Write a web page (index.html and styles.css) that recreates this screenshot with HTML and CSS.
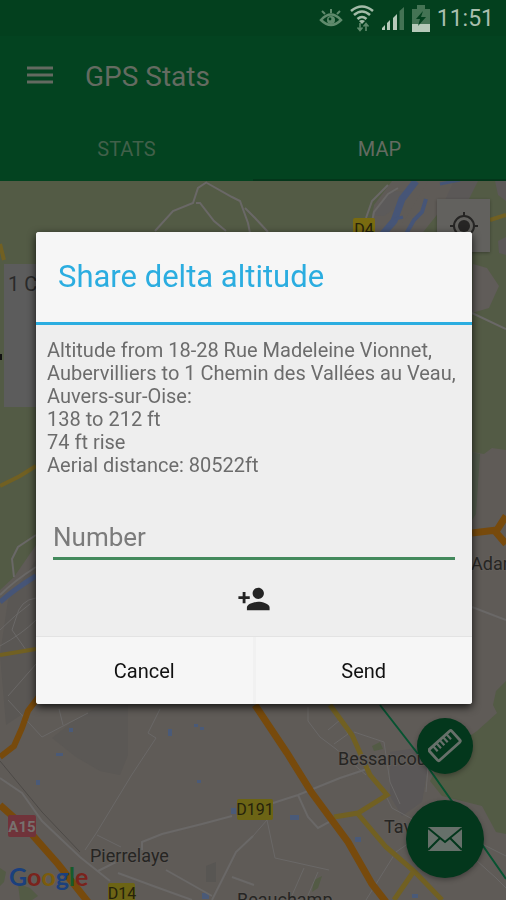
FILE: index.html
```html
<!DOCTYPE html>
<html lang="en">
<head>
  <meta charset="UTF-8">
  <meta name="viewport" content="width=device-width, initial-scale=1">
  <title>GPS Stats</title>
  <link rel="stylesheet" href="styles.css">
</head>
<body>
  <header class="app-header">
    <div class="status-bar">
      <svg viewBox="0 0 24 20" width="24" height="20">
        <path d="M2 12q10-11 20 0q-10 10-20 0z" fill="none" stroke="#5f8a6c" stroke-width="2.500"/>
        <circle cx="12" cy="12" r="4" fill="#5f8a6c"/>
        <circle cx="11" cy="11" r="1.4" fill="#03401e"/>
        <path d="M12 5V1M6 6L3 3M18 6l3-3" stroke="#5f8a6c" stroke-width="2"/>
      </svg>
      <svg viewBox="0 0 24 28" width="24" height="28">
        <g fill="none" stroke="#a3bba8" stroke-width="2.600">
          <path d="M1 7q11-9 22 0"/>
          <path d="M4 11q8-7 16 0"/>
          <path d="M7.500 15q4.500-4 9 0"/>
        </g>
        <path d="M9 17q3-2 6 0l-3 3z" fill="#a3bba8"/>
        <path d="M10 19v7M7.500 23.500L10 26.500l2.500-3M16 27v-7M13.500 22.500L16 19.500l2.500 3" fill="none" stroke="#5f8a6c" stroke-width="1.600"/>
      </svg>
      <svg viewBox="0 0 24 24" width="24" height="24">
        <path d="M1 24v-2l3-3v5zM6 24v-7l3-3v10zM12 24V12l4-4v16z" fill="#b6c9b9"/>
        <path d="M18.500 24V5L23 1v23z" fill="#447354"/>
      </svg>
      <svg viewBox="0 0 18 27" width="18" height="27">
        <path d="M0 4h5V0h8v4h5v23H0z" fill="#447354"/>
        <path d="M0 19h18v8H0z" fill="#b6c9b9"/>
        <path d="M11 6L4 14h4l-2 7 8-9H9z" fill="#03401e"/>
      </svg>
      <span class="clock">11:51</span>
    </div>
    <div class="toolbar">
      <button class="menu-btn" aria-label="Menu">
        <svg viewBox="0 0 26 20" width="26" height="20"><path d="M0 2h26M0 9h26M0 16h26" stroke="#636a60" stroke-width="3"/></svg>
      </button>
      <h1>GPS Stats</h1>
    </div>
    <nav class="tabs">
      <a class="tab" href="#stats">STATS</a>
      <a class="tab active" href="#map">MAP</a>
    </nav>
  </header>

  <main class="map" id="map">
    <svg class="map-canvas" viewBox="0 181 506 719" preserveAspectRatio="xMidYMid slice">
      <rect y="181" width="506" height="719" fill="#5f5b57"/>

      <!-- forests and fields -->
      <g fill="#535b45">
        <path d="M0 181H392L374 205 368 240H36V545L14 577 0 590z"/>
        <path d="M440 181h66v269l-14-2-8 6-12-2V255l-60-20z"/>
        <path d="M472 452l8 2-4 60-4 6z" fill="#515a4b"/>
        <path d="M506 681l-10 10-3 14 4 8-20 18-28 20-15 22-4 8 12 15 40 10 14 26 20 4z"/>
        <path d="M0 868l6 4-2 10-4 4zM18 884l12 4 8 8-6 4H20zM372 746l8-4 3 7-9 2zM314 880l8-4-4 12-6 4z"/>
      </g>

      <!-- built-up areas -->
      <g fill="#5b5857">
        <path d="M473 264l14 4 12 18-10 22-17 5z" fill="#605c59"/>
        <path d="M454 181l-10 15 6 13 18-8 10-20zM495 181h11v20l-8-6zM498 241l8-4v18l-7-2z"/>
        <path d="M52 738l20-16 20-12 36-5v50l-8 20-20-4-24-14z" fill="#5b5855"/>
        <path d="M8 600l28-40v145l-30 20-6-70z" fill="#5a5754"/>
        <path d="M390 752l26-4 12 18-6 36-20 14-12-20z" fill="#5a5757"/>
        <path d="M206 866l10-4v20h-10z" fill="#585653"/>
      </g>
      <path d="M372 215l18-24 18 1-10 14-14 10z" fill="#5c5a5a"/>
      <path d="M428 181h26l-14 30-20 25h-28l14-18z" fill="#5f5b57"/>

      <!-- water -->
      <g fill="none" stroke="#465577">
        <path d="M416 181l-14 18-8 22-12 14" stroke-width="7"/>
        <path d="M426 199l-4 13-8 8-8 14" stroke-width="4"/>
        <path d="M395 219l8-2M440 184l20-4" stroke-width="3"/>
        <path d="M0 602q16-14 36-26" stroke-width="5"/>
      </g>
      <g fill="#4a5a78">
        <path d="M168 729h4v7h-4zM56 753h7v3h-7zM36 780h4v5h-4zM194 724h4v3h-4zM200 727h4v3h-4zM69 728h4v4h-4zM197 780h4v3h-4zM231 808h5v6h-5zM290 815h9v5h-9zM202 893h7v6h-7zM355 837h6v5h-6zM412 894h6v4h-6z"/>
      </g>

      <!-- small roads -->
      <g fill="none" stroke="#6a6867" stroke-width="1">
        <path d="M155 231l18-20 20-8 5-15 9-6M207 183l25 14 8 4 8 22 2 10M196 203l4 0 14 18 12 10M245 208l10 10 13 14" stroke-width="2"/>
        <path d="M370 232l4-20 14-18 10-6M366 218l6-17 16-16" stroke-width="2"/>
        <path d="M472 313l34 16M472 607l34 13" stroke-width="2"/>
        <path d="M0 595q14-14 36-28M14 577l-2-18 6-12 18-12" stroke-width="2"/>
        <path d="M0 646q22-12 36-26M36 598q-16 2-20 20l-4 12 14 20M8 696l14-16 14-16M0 630q16-16 30-26"/>
        <path d="M8 700l34 37 46-24M59 709l4 16M160 709l-12 24 8 5-25 38-34 56-12 18M97 835l24 12"/>
        <path d="M0 778l22 15 20 28 38 36 30 24M118 873l38 14 36 13M98 871l20-10M166 870l46 26" stroke-width="2"/>
        <path d="M142 850v-8l20-8 40-10 30-8M212 900l24-48 17-16M232 877l22 8M270 804l28-9 42-17 30-10M298 795l10 22 10 11 22-12" stroke-width="2"/>
        <path d="M308 707v14l12 16 16 12 30 26M328 730l12-10 8 14-14 10M354 732l30 10 6 40 10 22M384 792l8 16 22 12M253 836l14-16 8 38 54 12M304 868l-14 32M366 900l30-48 20-14M476 860l20 18 10 10M478 842l28 14M318 872l-12 28M430 742l-4 50"/>
      </g>
      <path d="M0 761l42 51 38 40" fill="none" stroke="#4d4a47" stroke-width="1"/>

      <!-- yellow roads -->
      <g fill="none" stroke="#716022" stroke-width="5">
        <path d="M330 705l22 30 18 40 17 20-29 18-24 4M358 814l28 33 28 24 28 29M414 871l-20 29"/>
        <path d="M0 244l4 16M0 486l20-10 16-10M0 655l36-6M490 220l16-5" stroke-width="4"/>
      </g>

      <!-- main roads -->
      <g fill="none" stroke="#774a0c" stroke-width="7">
        <path d="M255 705l32 48 25 40 36 49 24 42 14 18"/>
        <path d="M0 757l14-11 8-18 6-17 12-16" stroke-width="6"/>
        <path d="M0 805l28 25 30 34 30 38"/>
        <path d="M472 533l25-3 9-14M494 530l12 14"/>
      </g>
      <path d="M380 705l45 58 31 44 50 72" fill="none" stroke="#075331" stroke-width="2"/>

      <!-- road shields -->
      <rect x="353" y="218" width="22" height="22" rx="2" fill="#796b10"/>
      <rect x="237" y="799" width="36" height="21" rx="2" fill="#6c6415"/>
      <rect x="108" y="883" width="27" height="22" rx="2" fill="#6c6415"/>
      <rect x="8" y="815" width="28" height="22" rx="2" fill="#70333a"/>
      <g class="shield">
        <text x="364" y="235">D4</text>
        <text x="255" y="815">D191</text>
        <text x="122" y="899">D14</text>
        <text x="22" y="832" class="shield-light">A15</text>
      </g>

      <g class="place">
        <text x="90" y="862">Pierrelaye</text>
        <text x="338" y="765">Bessancourt</text>
        <text x="384" y="833">Taverny</text>
        <text x="237" y="906">Beauchamp</text>
        <text x="471" y="570">Adam</text>
      </g>
      <path d="M0 354h2v6H0z" fill="#111"/>
    </svg>

    <div class="place-card">1 C</div>

    <button class="locate-btn" aria-label="My location">
      <svg viewBox="0 0 28 28" width="28" height="28">
        <circle cx="14" cy="14" r="10" fill="none" stroke="#262524" stroke-width="2"/>
        <circle cx="14" cy="14" r="6" fill="#262524"/>
        <path d="M14 0v5M14 23v5M0 14h5M23 14h5" stroke="#262524" stroke-width="2"/>
      </svg>
    </button>

    <a class="google" href="#google"><span class="g-blue">G</span><span class="g-red">o</span><span class="g-yellow">o</span><span class="g-blue">g</span><span class="g-green">l</span><span class="g-red">e</span></a>

    <div class="fabs">
      <button class="fab" aria-label="Measure">
        <svg viewBox="0 0 34 34" width="34" height="34">
          <g transform="rotate(-42 17 17)" fill="none" stroke="#67706a" stroke-width="2.800">
            <rect x="2" y="9" width="30" height="15" rx="1.500"/>
            <path d="M8 9v7M12.500 9v7M17 9v7M21.500 9v7M26 9v7" stroke-width="2.200"/>
          </g>
        </svg>
      </button>
      <button class="fab fab-large" aria-label="Send message">
        <svg viewBox="0 0 34 24" width="34" height="24">
          <path d="M0 0h34v24H0z" fill="#66706a"/>
          <path d="M0 1l17 14L34 1M0 23l12-12M34 23L22 11" fill="none" stroke="#03371c" stroke-width="2"/>
        </svg>
      </button>
    </div>
  </main>

  <div class="overlay">
    <form class="dialog" role="dialog" aria-labelledby="dialog-title">
      <h2 id="dialog-title">Share delta altitude</h2>
      <div class="dialog-body">
        <p>Altitude from 18-28 Rue Madeleine Vionnet, Aubervilliers to 1 Chemin des Vallées au Veau, Auvers-sur-Oise:<br>
          138 to 212 ft<br>
          74 ft rise<br>
          Aerial distance: 80522ft</p>
        <input class="number" type="tel" placeholder="Number" aria-label="Number">
        <button class="contact-btn" type="button" aria-label="Add contact">
          <svg viewBox="0 0 24 24" width="34" height="34">
            <path fill="#242424" d="M15 12c2.210 0 4-1.790 4-4s-1.790-4-4-4-4 1.790-4 4 1.790 4 4 4zm-9-2V7H4v3H1v2h3v3h2v-3h3v-2H6zm9 4c-2.670 0-8 1.340-8 4v2h16v-2c0-2.660-5.330-4-8-4z"/>
          </svg>
        </button>
      </div>
      <div class="dialog-actions">
        <button type="button">Cancel</button>
        <button type="submit">Send</button>
      </div>
    </form>
  </div>
</body>
</html>
```
FILE: styles.css
```css
* {
  box-sizing: border-box;
}

body {
  margin: 0;
  min-height: 100vh;
  display: flex;
  flex-direction: column;
  font-family: Roboto, "Liberation Sans", sans-serif;
  background-color: #5f5b57;
}

button {
  border: 0;
  padding: 0;
  background: none;
  font-family: inherit;
  cursor: pointer;
}

svg {
  display: block;
}

/* header */
.app-header {
  background-color: #034320;
  color: #646b61;
}

.status-bar {
  display: flex;
  align-items: center;
  justify-content: flex-end;
  gap: 7px;
  height: 36px;
  padding: 0 12px;
  background-color: #03401e;
}

.clock {
  color: #a9bfae;
  font-size: 23px;
}

.toolbar {
  display: flex;
  align-items: center;
  gap: 32px;
  height: 80px;
  padding: 0 27px;
}

.toolbar h1 {
  margin: 0;
  font-size: 28px;
  font-weight: 400;
}

.tabs {
  display: flex;
}

.tab {
  flex: 1;
  height: 65px;
  line-height: 66px;
  text-align: center;
  font-size: 20px;
  color: #41604a;
  text-decoration: none;
}

.tab.active {
  color: #646b61;
  border-bottom: 2px solid #03361a;
}

/* map */
.map {
  position: relative;
  flex: 1;
  overflow: hidden;
}

.map-canvas {
  position: absolute;
  width: 100%;
  height: 100%;
}

.place {
  font-size: 18px;
  fill: #262523;
  stroke: #625e5a;
  stroke-width: 2px;
  paint-order: stroke;
}

.shield {
  font-size: 16px;
  text-anchor: middle;
  fill: #25220c;
}

.shield-light {
  font-size: 15px;
  font-weight: 700;
  fill: #77716e;
}

.place-card {
  position: absolute;
  top: 83px;
  left: 4px;
  width: 36px;
  height: 143px;
  padding: 8px 4px;
  background-color: #5c5c5c;
  color: #2a2a2a;
  font-size: 20px;
  white-space: nowrap;
}

.locate-btn {
  position: absolute;
  top: 18px;
  right: 16px;
  width: 53px;
  height: 53px;
  display: grid;
  place-items: center;
  background-color: #62615e;
  box-shadow: 0 1px 3px rgba(0, 0, 0, 0.3);
}

.google {
  position: absolute;
  left: 9px;
  bottom: 8px;
  font-family: Lato, sans-serif;
  font-size: 25px;
  font-weight: 700;
  line-height: 32px;
  text-decoration: none;
}

.g-blue { color: #1b407d; }
.g-red { color: #7a231c; }
.g-yellow { color: #7c5c0c; }
.g-green { color: #175b2b; }

.fabs {
  position: absolute;
  right: 22px;
  bottom: 22px;
  display: flex;
  flex-direction: column;
  align-items: center;
  gap: 26px;
}

.fab {
  display: grid;
  place-items: center;
  width: 56px;
  height: 56px;
  border-radius: 50%;
  background-color: #03371c;
  box-shadow: 0 2px 5px rgba(0, 0, 0, 0.3);
}

.fab-large {
  width: 78px;
  height: 78px;
}

/* dialog */
.overlay {
  position: fixed;
  inset: 0;
  display: flex;
  align-items: center;
  justify-content: center;
  padding: 36px 34px 0 36px;
}

.dialog {
  width: 100%;
  max-width: 560px;
  border-radius: 3px;
  overflow: hidden;
  background-color: #eee;
  box-shadow: 0 3px 8px rgba(0, 0, 0, 0.8);
}

.dialog h2 {
  margin: 0;
  padding: 0 22px;
  background-color: #f6f6f6;
  border-bottom: 3px solid #2bade0;
  color: #2bade0;
  font-size: 31px;
  font-weight: 400;
  line-height: 90px;
}

.dialog-body {
  display: flex;
  flex-direction: column;
  padding: 14px 11px 18px;
}

.dialog-body p {
  margin: 0;
  color: #6c6c6c;
  font-size: 20px;
  line-height: 23px;
}

.number {
  margin: 40px 6px 20px;
  height: 43px;
  padding: 0;
  border: 0;
  border-bottom: 3px solid #43895c;
  background: none;
  color: #333;
  font-family: inherit;
  font-size: 26px;
  outline: none;
}

.number::placeholder {
  color: #7b7b7b;
  opacity: 1;
}

.contact-btn {
  align-self: center;
  padding: 2px;
}

.dialog-actions {
  display: flex;
  border-top: 1px solid #e3e3e3;
  background-color: #f6f6f6;
}

.dialog-actions button {
  flex: 1;
  height: 67px;
  color: #111;
  font-size: 20px;
}

.dialog-actions button + button {
  border-left: 3px solid #f1f1f1;
}
```
